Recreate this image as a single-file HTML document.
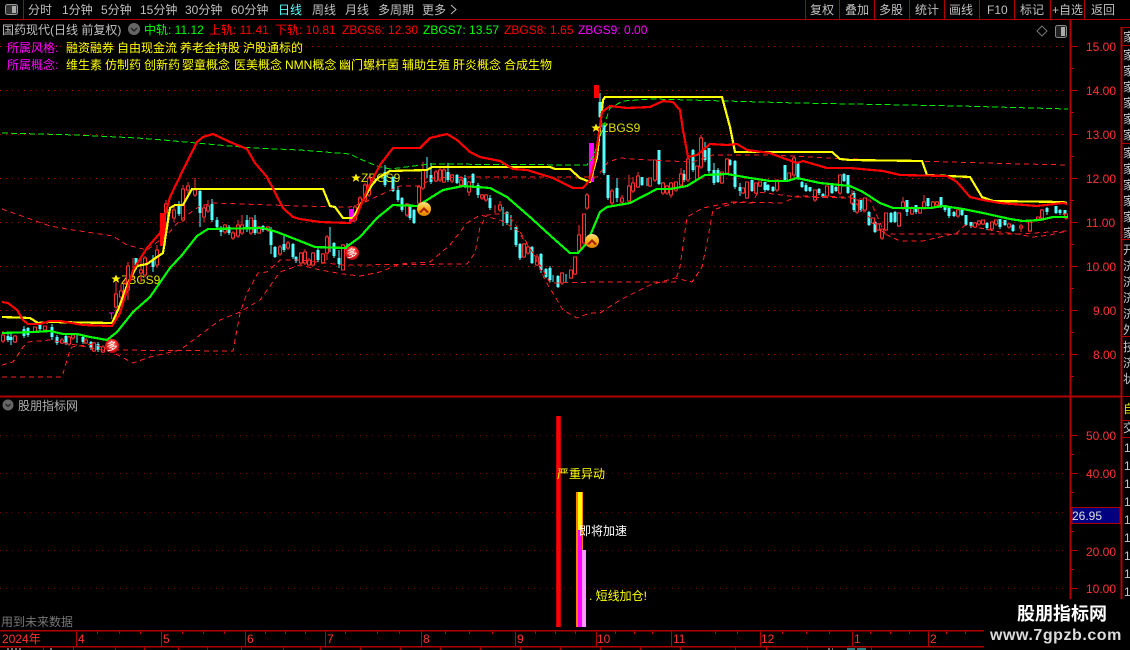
<!DOCTYPE html>
<html lang="zh">
<head>
<meta charset="utf-8">
<title>股朋指标网</title>
<style>
html,body{margin:0;padding:0;background:#000;width:1130px;height:650px;overflow:hidden}
svg{display:block;position:absolute;left:0;top:0}
text{font-family:"Liberation Sans","WenQuanYi Zen Hei","Noto Sans CJK SC",sans-serif;font-size:12px}
.g{fill:#c0c0c0}
.r{fill:#ff3232}
.y{fill:#ffff00}
.m{fill:#ff00ff}
.l{fill:#00ff00}
</style>
</head>
<body>
<svg width="1130" height="650" viewBox="0 0 1130 650" xmlns="http://www.w3.org/2000/svg">
<rect width="1130" height="650" fill="#000"/>

<!-- grid -->
<g stroke="#b00000" stroke-width="1" stroke-dasharray="1 5" shape-rendering="crispEdges">
<path d="M0 46.500H1068M0 90.500H1068M0 134.500H1068M0 178.500H1068M0 222.500H1068M0 266.500H1068M0 310.500H1068M0 354.500H1068"/>
<path stroke="#800000" d="M0 435.500H1068M0 473.500H1068M0 512.500H1068M0 550.500H1068M0 588.500H1068"/>
</g>

<!-- frame lines -->
<g stroke="#b00000" fill="none" shape-rendering="crispEdges">
<path d="M0 19.500H1130" />
<path d="M23.500 0V19M805.500 0V19M839.500 0V19M874.500 0V19M909.500 0V19M944.500 0V19M979.500 0V19M1014.500 0V19M1050.500 0V19M1084.500 0V19"/>
<path stroke-width="2" d="M1070.500 20V599M1121.500 27V599"/>
<path stroke-width="2" d="M0 396.500H1122"/>
<path d="M1122 27.500H1130M1122 45.500H1130M1122 143.500H1130M1122 239.500H1130M1122 336.500H1130M1122 396.500H1130M1122 420.500H1130M1122 437.500H1130"/>
<path d="M1071 46.500H1078M1071 90.500H1078M1071 134.500H1078M1071 178.500H1078M1071 222.500H1078M1071 266.500H1078M1071 310.500H1078M1071 354.500H1078"/>
<path d="M1071 68.500H1074M1071 112.500H1074M1071 156.500H1074M1071 200.500H1074M1071 244.500H1074M1071 288.500H1074M1071 332.500H1074M1071 376.500H1074"/>
<path d="M1071 435.500H1078M1071 473.500H1078M1071 550.500H1078M1071 588.500H1078M1071 454.500H1074M1071 492.500H1074M1071 531.500H1074M1071 569.500H1074"/>
<path stroke-width="1.500" d="M0 630.500H984M0 646.500H984"/>
<path d="M76.500 630V646M161.500 630V646M245.500 630V646M325.500 630V646M421.500 630V646M515.500 630V646M596.500 630V646M671.500 630V646M760.500 630V646M852.500 630V646M928.500 630V646"/>
<path d="M97.500 630V634M119.500 630V634M140.500 630V634M182.500 630V634M203.500 630V634M224.500 630V634M265.500 630V634M285.500 630V634M305.500 630V634M345.500 630V634M377.500 630V634M399.500 630V634M445.500 630V634M469.500 630V634M492.500 630V634M535.500 630V634M555.500 630V634M575.500 630V634M615.500 630V634M634.500 630V634M652.500 630V634M715.500 630V634M737.500 630V634M782.500 630V634M806.500 630V634M829.500 630V634M870.500 630V634M890.500 630V634M909.500 630V634M946.500 630V634M965.500 630V634"/>
<path d="M43.500 646V650M73.500 646V650M115.500 646V650M144.500 646V650M178.500 646V650M207.500 646V650M241.500 646V650M283.500 646V650M320.500 646V650M360.500 646V650M400.500 646V650M440.500 646V650M480.500 646V650M520.500 646V650M560.500 646V650M600.500 646V650M640.500 646V650M680.500 646V650M735.500 646V650M766.500 646V650M807.500 646V650M871.500 646V650"/>
</g>
<!-- clipped tick-row glyph tops below the date axis -->
<path d="M7 649h15M50 649h4M828 649h5" stroke="#ddd" stroke-width="1" shape-rendering="crispEdges" stroke-dasharray="2 2"/>
<path d="M847 649h8M857 649h9" stroke="#55ffff" stroke-width="1" shape-rendering="crispEdges"/>

<!-- signal labels (under candles and lines) -->
<text x="121" y="284" fill="#e0e000">ZBGS9</text>
<text x="361" y="182" fill="#e0e000">ZBGS9</text>
<text x="601" y="132" fill="#e0e000">ZBGS9</text>

<!-- cyan candles -->
<path stroke="#55ffff" stroke-width="1" fill="none" shape-rendering="crispEdges" d="M8 332V342M11 333V345M24 326V338M28 327V337M40 322V331M52 324V340M57 335V345M66 334V345M77 334V343M83 335V344M91 341V350M98 342V352M136 258V270M153 255V272M179 201V216M200 190V227M212 199V222M217 217V228M221 226V236M229 225V235M247 215V232M255 215V235M263 225V232M271 227V254M275 246V258M284 236V252M293 243V259M296 256V263M318 248V262M330 227V252M334 242V258M339 250V268M347 243V255M385 165V187M393 176V192M398 186V202M402 197V212M410 204V220M414 209V224M427 157V178M431 163V184M448 163V182M457 174V184M465 175V188M473 173V187M478 183V198M490 195V210M503 207V226M507 211V225M511 215V230M516 227V247M520 243V260M532 246V264M541 253V273M546 268V278M550 266V282M553 275V282M558 275V288M566 274V282M600 93V118M604 125V175M608 175V200M617 178V202M642 177V186M647 178V186M659 150V185M684 170V182M693 149V172M705 142V162M709 148V173M714 163V185M718 168V183M730 159V166M735 160V189M740 183V196M752 180V192M765 182V192M768 184V191M773 186V192M785 165V182M798 162V180M802 181V188M806 183V192M810 187V192M819 188V195M823 193V198M832 183V194M836 186V192M844 173V182M848 175V194M854 191V212M861 200V212M869 211V226M875 221V233M891 212V223M895 211V223M907 200V216M916 205V214M928 198V208M941 197V208M945 205V212M949 208V218M954 211V217M962 208V216M966 215V226M971 222V228M987 222V230M1000 219V229M1005 220V226M1013 224V232M1047 207V215M1056 206V214M1060 209V215M1065 210V216"/>
<path stroke="#55ffff" stroke-width="3" fill="none" shape-rendering="crispEdges" d="M8 336V340M11 337V340M24 329V336M28 328V335M40 325V329M52 327V337M57 337V343M66 336V343M83 337V342M91 342V348M98 344V350M136 258V266M153 260V267M179 205V214M200 191V213M212 204V220M217 220V227M221 228V232M229 227V233M247 220V228M255 220V233M263 226V230M271 230V245M275 247V257M284 244V250M293 244V257M296 257V261M318 250V260M334 243V256M339 258V264M347 248V252M385 172V185M393 177V191M398 190V200M402 198V210M410 205V218M414 210V223M431 175V182M448 172V180M457 175V183M465 178V185M473 174V183M478 185V195M490 198V208M507 212V223M516 227V245M520 244V258M532 247V263M541 254V270M546 269V277M550 268V280M558 276V287M600 102V117M604 125V173M608 175V198M617 188V198M642 177V185M659 150V184M684 174V180M693 150V170M705 150V160M709 148V171M714 170V183M718 170V182M730 160V165M735 161V187M740 187V191M752 180V191M765 182V190M768 185V190M773 187V191M785 165V180M798 162V178M802 182V187M806 185V191M810 187V191M819 189V193M823 194V197M832 183V193M836 187V191M844 174V181M848 175V193M854 193V210M861 200V210M869 212V225M875 222V232M891 213V222M895 212V222M907 200V212M916 205V212M928 198V206M941 197V207M945 205V210M949 208V216M954 212V216M962 208V215M966 215V225M971 222V226M987 223V228M1000 219V227M1005 220V225M1013 225V231M1047 208V212M1056 206V213M1060 210V213M1065 210V215"/>

<!-- red candles -->
<path stroke="#ff3232" stroke-width="1" fill="none" shape-rendering="crispEdges" d="M3 331V343M15 335V343M35 327V333M45 326V332M62 338V344M69 336V346M73 334V340M86 338V344M94 342V352M103 345V353M116 282V315M121 284V300M125 280V296M128 262V300M133 258V280M141 258V282M145 256V277M157 245V268M166 200V235M174 205V222M183 185V222M188 182V195M195 178V197M204 205V222M208 200V213M225 224V234M233 231V240M238 220V238M242 215V235M251 218V235M259 226V234M268 226V232M280 245V256M288 241V250M301 252V265M305 249V265M309 258V266M313 252V266M323 253V264M327 235V260M343 244V270M355 205V222M360 196V208M365 183V202M369 176V197M407 203V217M419 185V205M423 162V190M436 170V182M440 168V182M444 168V183M452 174V183M461 176V187M469 181V196M482 194V200M486 194V202M495 205V213M500 201V212M524 243V258M528 246V255M537 254V266M562 272V285M571 270V279M575 257V275M579 225V253M584 214V245M587 193V210M612 189V205M622 195V205M629 175V203M633 177V193M638 172V188M650 178V187M655 160V182M663 182V195M667 185V195M671 182V198M676 182V192M681 168V186M688 158V182M697 166V180M701 135V169M722 172V184M727 158V175M743 188V194M747 182V199M756 183V194M760 182V187M777 180V192M789 173V181M794 156V178M815 190V202M827 186V198M840 175V195M852 190V205M857 200V214M865 198V212M873 218V224M878 223V231M882 229V240M886 213V231M899 213V227M903 197V210M912 206V215M920 208V214M924 195V210M933 201V209M937 201V208M958 209V218M975 222V228M979 220V226M983 220V225M992 221V230M996 220V226M1009 223V229M1021 224V232M1030 221V232M1038 217V220M1042 209V220M1066 213V220"/>
<path stroke="#ff3232" stroke-width="1" fill="#000" shape-rendering="crispEdges" d="M1.500 335h3v6h-3zM13.500 336h3v6h-3zM33.500 327h3v5h-3zM43.500 326h3v4h-3zM60.500 340h3v3h-3zM67.500 337h3v7h-3zM71.500 335h3v3h-3zM84.500 340h3v3h-3zM92.500 343h3v8h-3zM101.500 347h3v5h-3zM114.500 294h3v13h-3zM119.500 291h3v6h-3zM123.500 284h3v9h-3zM126.500 266h3v24h-3zM139.500 270h3v3h-3zM143.500 258h3v17h-3zM155.500 250h3v15h-3zM164.500 204h3v19h-3zM172.500 210h3v8h-3zM181.500 189h3v31h-3zM186.500 186h3v4h-3zM193.500 190h3v5h-3zM202.500 208h3v9h-3zM206.500 206h3v5h-3zM223.500 225h3v7h-3zM231.500 233h3v5h-3zM236.500 225h3v11h-3zM240.500 225h3v8h-3zM249.500 218h3v15h-3zM257.500 227h3v6h-3zM266.500 227h3v3h-3zM278.500 247h3v7h-3zM286.500 243h3v5h-3zM299.500 253h3v10h-3zM303.500 252h3v11h-3zM307.500 260h3v5h-3zM311.500 253h3v12h-3zM321.500 254h3v9h-3zM325.500 237h3v16h-3zM341.500 245h3v25h-3zM353.500 207h3v13h-3zM358.500 198h3v7h-3zM363.500 185h3v15h-3zM367.500 178h3v17h-3zM405.500 204h3v11h-3zM417.500 187h3v16h-3zM421.500 170h3v18h-3zM434.500 172h3v9h-3zM438.500 170h3v10h-3zM442.500 170h3v12h-3zM450.500 175h3v6h-3zM459.500 180h3v5h-3zM467.500 182h3v10h-3zM480.500 195h3v3h-3zM484.500 195h3v5h-3zM498.500 205h3v5h-3zM522.500 244h3v13h-3zM526.500 247h3v6h-3zM535.500 257h3v8h-3zM560.500 273h3v10h-3zM569.500 270h3v8h-3zM573.500 257h3v17h-3zM577.500 235h3v16h-3zM582.500 214h3v29h-3zM585.500 195h3v13h-3zM610.500 191h3v12h-3zM620.500 198h3v4h-3zM627.500 186h3v15h-3zM631.500 183h3v8h-3zM636.500 176h3v11h-3zM648.500 178h3v8h-3zM653.500 160h3v20h-3zM661.500 183h3v10h-3zM665.500 186h3v7h-3zM669.500 183h3v12h-3zM674.500 182h3v8h-3zM679.500 174h3v11h-3zM686.500 159h3v21h-3zM695.500 166h3v13h-3zM699.500 138h3v29h-3zM720.500 172h3v11h-3zM725.500 159h3v14h-3zM741.500 188h3v5h-3zM745.500 182h3v16h-3zM754.500 183h3v10h-3zM758.500 182h3v4h-3zM775.500 180h3v10h-3zM787.500 173h3v7h-3zM792.500 158h3v17h-3zM813.500 190h3v10h-3zM825.500 186h3v10h-3zM838.500 175h3v18h-3zM850.500 195h3v8h-3zM855.500 200h3v12h-3zM863.500 198h3v12h-3zM871.500 218h3v5h-3zM876.500 224h3v6h-3zM880.500 229h3v9h-3zM884.500 213h3v17h-3zM897.500 213h3v13h-3zM901.500 202h3v6h-3zM910.500 208h3v6h-3zM918.500 208h3v5h-3zM922.500 202h3v6h-3zM931.500 202h3v6h-3zM935.500 202h3v3h-3zM956.500 210h3v6h-3zM973.500 223h3v4h-3zM977.500 221h3v3h-3zM981.500 220h3v4h-3zM990.500 222h3v7h-3zM994.500 220h3v4h-3zM1007.500 224h3v3h-3zM1019.500 226h3v2h-3zM1028.500 222h3v9h-3zM1036.500 217h3v2h-3zM1040.500 210h3v8h-3zM1064.500 214h3v4h-3z"/>

<!-- solid bars -->
<g shape-rendering="crispEdges">
<rect x="160" y="213" width="6" height="33" fill="#ff0000"/>
<rect x="349" y="209" width="5" height="13" fill="#ff00ff"/>
<rect x="589" y="143" width="5" height="39" fill="#ff00ff"/>
<rect x="594" y="85" width="5" height="13" fill="#ff0000"/>
<path d="M109 313h5M111.500 313v6" stroke="#ff00ff" fill="none"/>
</g>

<!-- dashed bands -->
<g fill="none" stroke="#ff2020" stroke-width="1" stroke-dasharray="5 4" shape-rendering="crispEdges">
<polyline points="2,209 33,220 50,226 73,230 113,236 127,245 147,250 160,240 167,235 180,220 200,206 213,203 300,206 350,207 363,203 380,195 400,186 420,186 433,178 473,177 577,177 597,177 608,162 620,158 647,160 693,162 713,155 770,155 850,159 983,163 1067,165"/>
<polyline points="2,377 62,377 70,350 72,347 93,344 110,350 233,351 240,313 247,293 258,273 267,272 280,260 300,260 317,262 343,265 467,264 475,253 480,227 487,215 507,213 517,227 527,243 543,270 550,283 600,282 675,282 680,267 687,217 703,208 733,202 752,203 758,192 797,197 850,198 870,200 885,234 963,234 1017,234 1067,231"/>
<polyline points="2,365 13,362 23,347 28,342 50,340 112,352 133,363 150,357 167,353 180,350 200,335 220,320 240,312 260,300 280,272 300,265 320,270 343,274 360,276 380,272 400,264 430,262 450,245 467,223 480,215 500,220 517,230 533,253 545,280 563,310 577,318 590,313 600,313 620,300 650,285 675,278 692,282 702,267 707,243 713,210 737,202 783,203 797,196 850,197 885,234 900,241 923,241 957,233 965,225 1000,232 1017,234 1033,237 1050,235 1067,231"/>
</g>
<g fill="none" stroke="#00ee00" stroke-width="1" stroke-dasharray="6 3" shape-rendering="crispEdges">
<polyline points="2,133 77,135 137,138 163,140 207,144 253,148 300,150 350,154 360,159 377,166 390,169 430,164 587,165 593,157 610,108 623,101 653,99 797,103 850,104 960,106 1068,109"/>
</g>

<!-- main lines -->
<g fill="none" stroke-linejoin="round" stroke-width="2.200" shape-rendering="crispEdges">
<polyline stroke="#00ff00" points="2,333 33,332 50,331 63,334 77,334 90,337 107,340 117,332 133,312 150,297 170,268 182,255 197,236 208,229 263,228 277,232 300,241 315,247 345,248 360,237 377,218 393,205 417,206 427,200 443,190 463,186 490,188 507,197 530,217 553,238 570,253 578,253 587,243 600,212 607,207 630,203 657,189 670,189 687,186 705,175 727,174 750,178 770,181 787,181 797,178 820,183 850,186 863,192 880,203 893,208 930,208 943,206 963,209 983,213 1010,219 1023,221 1040,220 1053,217 1068,217"/>
<polyline stroke="#ffff00" points="2,317 30,318 38,323 50,322 112,323 118,310 128,283 137,266 147,264 157,257 163,253 170,208 175,205 183,205 192,189 323,189 330,206 335,207 343,218 353,218 363,200 372,185 378,178 390,171 427,170 432,167 550,167 555,169 570,169 580,178 590,182 597,157 603,100 605,97 722,97 730,127 735,152 832,152 840,159 850,160 922,161 927,175 970,177 982,197 993,201 1063,202 1067,203"/>
<polyline stroke="#ff0000" points="2,302 8,303 17,310 23,320 28,324 40,324 50,321 60,321 83,325 112,326 120,313 133,270 147,248 160,233 170,197 183,170 197,142 203,137 213,134 230,142 247,149 255,163 267,177 283,208 293,217 300,219 320,222 350,223 357,215 367,190 380,165 393,148 420,148 430,138 447,134 457,140 470,152 480,157 500,161 513,169 527,170 553,178 573,188 583,188 590,180 595,160 602,112 610,106 627,108 650,107 663,101 673,102 680,110 683,130 688,157 697,155 710,144 727,145 737,144 747,150 770,153 783,158 797,163 803,161 827,168 850,168 883,171 900,175 947,176 957,182 970,197 983,200 1000,203 1037,206 1063,203 1067,204"/>
</g>

<!-- markers -->
<defs>
<radialGradient id="rd" cx="50%" cy="40%" r="60%"><stop offset="0" stop-color="#ff9a8a"/><stop offset=".6" stop-color="#f02020"/><stop offset="1" stop-color="#b00000"/></radialGradient>
<linearGradient id="gd" x1="0" y1="0" x2="0" y2="1"><stop offset="0" stop-color="#ffe28a"/><stop offset=".6" stop-color="#ffa500"/><stop offset="1" stop-color="#d88000"/></linearGradient>
</defs>
<circle cx="112" cy="346" r="7" fill="url(#rd)"/>
<text x="112" y="350" text-anchor="middle" style="font-size:11px" fill="#fff">多</text>
<circle cx="352" cy="253" r="7" fill="url(#rd)"/>
<text x="352" y="257" text-anchor="middle" style="font-size:11px" fill="#fff">多</text>
<circle cx="424" cy="209" r="7" fill="url(#gd)"/>
<path d="M419 212l5-5 5 5-2 1-3-3-3 3z" fill="#a82000"/>
<circle cx="592" cy="241" r="7" fill="url(#gd)"/>
<path d="M587 244l5-5 5 5-2 1-3-3-3 3z" fill="#a82000"/>

<!-- stars -->
<path d="M116 274.500l1.400 3h3.300l-2.600 2.100 1 3.300-3.100-2-3.100 2 1-3.300-2.600-2.100h3.300z" fill="#ffee00"/>
<path d="M356 173.500l1.400 3h3.300l-2.600 2.100 1 3.300-3.100-2-3.100 2 1-3.300-2.600-2.100h3.300z" fill="#ffee00"/>
<path d="M596 123.500l1.400 3h3.300l-2.600 2.100 1 3.300-3.100-2-3.100 2 1-3.300-2.600-2.100h3.300z" fill="#ffee00"/>

<!-- nav -->
<rect x="0" y="0" width="23" height="19" fill="#000"/>
<rect x="5.500" y="4.500" width="12" height="10" rx="2" fill="#333" stroke="#999"/>
<rect x="12" y="6" width="4" height="7" fill="#aaa"/>
<g class="g">
<text class="g" x="28" y="14">分时</text>
<text class="g" x="62" y="14">1分钟</text>
<text class="g" x="101" y="14">5分钟</text>
<text class="g" x="140" y="14">15分钟</text>
<text class="g" x="185" y="14">30分钟</text>
<text class="g" x="231" y="14">60分钟</text>
<text x="278" y="14" fill="#55ffff">日线</text>
<text class="g" x="312" y="14">周线</text>
<text class="g" x="345" y="14">月线</text>
<text class="g" x="378" y="14">多周期</text>
<text class="g" x="422" y="14">更多</text>
<path d="M451 5l5 4.500-5 4.500" fill="none" stroke="#c0c0c0"/>
<text class="g" x="810" y="14">复权</text>
<text class="g" x="845" y="14">叠加</text>
<text class="g" x="879" y="14">多股</text>
<text class="g" x="915" y="14">统计</text>
<text class="g" x="949" y="14">画线</text>
<text class="g" x="987" y="14">F10</text>
<text class="g" x="1020" y="14">标记</text>
<text class="g" x="1052" y="14">+自选</text>
<text class="g" x="1091" y="14">返回</text>
</g>

<!-- header -->
<text class="g" x="2" y="34">国药现代(日线 前复权)</text>
<circle cx="134" cy="29" r="6" fill="#666"/>
<path d="M131 28l3 3 3-3" fill="none" stroke="#222" stroke-width="1.500"/>
<text class="l" x="144" y="34">中轨: 11.12</text>
<text class="r" x="209" y="34" style="fill:#ff0000">上轨: 11.41</text>
<text class="r" x="275" y="34" style="fill:#ff0000">下轨: 10.81</text>
<text x="342" y="34" fill="#ff0000">ZBGS6: 12.30</text>
<text class="l" x="423" y="34">ZBGS7: 13.57</text>
<text x="504" y="34" fill="#ff0000">ZBGS8: 1.65</text>
<text class="m" x="578" y="34">ZBGS9: 0.00</text>
<path d="M1042 26l5 5-5 5-5-5z" fill="none" stroke="#777"/>
<rect x="1055.500" y="25.500" width="11" height="12" rx="2" fill="#222" stroke="#888"/>
<rect x="1061" y="27" width="4" height="9" fill="#aaa"/>

<text class="m" x="7" y="52">所属风格:</text>
<text class="y" x="66" y="52">融资融券</text>
<text class="y" x="117" y="52">自由现金流</text>
<text class="y" x="180" y="52">养老金持股</text>
<text class="y" x="243" y="52">沪股通标的</text>
<text class="m" x="7" y="69">所属概念:</text>
<text class="y" x="66" y="69">维生素</text>
<text class="y" x="105" y="69">仿制药</text>
<text class="y" x="144" y="69">创新药</text>
<text class="y" x="182" y="69">婴童概念</text>
<text class="y" x="234" y="69">医美概念</text>
<text class="y" x="285" y="69">NMN概念</text>
<text class="y" x="339" y="69">幽门螺杆菌</text>
<text class="y" x="402" y="69">辅助生殖</text>
<text class="y" x="453" y="69">肝炎概念</text>
<text class="y" x="504" y="69">合成生物</text>

<!-- price axis -->
<text class="r" x="1086" y="51">15.00</text>
<text class="r" x="1086" y="95">14.00</text>
<text class="r" x="1086" y="139">13.00</text>
<text class="r" x="1086" y="183">12.00</text>
<text class="r" x="1086" y="227">11.00</text>
<text class="r" x="1086" y="271">10.00</text>
<text class="r" x="1093" y="315">9.00</text>
<text class="r" x="1093" y="359">8.00</text>

<!-- sub header -->
<circle cx="8" cy="405" r="5.500" fill="#666"/>
<path d="M5.500 404l2.500 2.500 2.500-2.500" fill="none" stroke="#222" stroke-width="1.300"/>
<text class="g" x="18" y="410" style="fill:#b0b0b0">股朋指标网</text>

<!-- sub axis -->
<text class="r" x="1086" y="440">50.00</text>
<text class="r" x="1086" y="478">40.00</text>
<text class="r" x="1086" y="556">20.00</text>
<text class="r" x="1086" y="593">10.00</text>
<rect x="1072" y="507.500" width="48" height="16" fill="#000080" stroke="#b00000"/>
<text x="1072" y="520" fill="#e0e0e0">26.95</text>

<!-- sub bars -->
<g shape-rendering="crispEdges">
<rect x="556" y="416" width="5" height="211" fill="#c80000"/>
<rect x="557" y="416" width="3" height="211" fill="#ff0000"/>
<rect x="576" y="492" width="7" height="135" fill="#ff8000"/>
<rect x="578" y="492" width="4" height="38" fill="#ffff00"/>
<rect x="578" y="530" width="4" height="97" fill="#ff00ff"/>
<rect x="582" y="550" width="4" height="77" fill="#ff99ff"/>
</g>
<text class="y" x="557" y="478">严重异动</text>
<text x="579" y="535" fill="#fff">即将加速</text>
<text class="y" x="589" y="600">. 短线加仓!</text>
<text x="1" y="626" fill="#777">用到未来数据</text>

<!-- dates -->
<text class="r" x="2" y="643">2024年</text>
<text class="r" x="78" y="643">4</text>
<text class="r" x="163" y="643">5</text>
<text class="r" x="247" y="643">6</text>
<text class="r" x="327" y="643">7</text>
<text class="r" x="423" y="643">8</text>
<text class="r" x="517" y="643">9</text>
<text class="r" x="597" y="643">10</text>
<text class="r" x="673" y="643">11</text>
<text class="r" x="761" y="643">12</text>
<text class="r" x="854" y="643">1</text>
<text class="r" x="930" y="643">2</text>

<!-- right side column (clipped) -->
<g fill="#c8c8c8">
<text x="1123" y="41">家</text>
<text x="1123" y="59">家</text><text x="1123" y="75">家</text><text x="1123" y="91">家</text><text x="1123" y="107">家</text><text x="1123" y="123">家</text><text x="1123" y="139">家</text>
<text x="1123" y="157">家</text><text x="1123" y="173">家</text><text x="1123" y="189">家</text><text x="1123" y="205">家</text><text x="1123" y="221">家</text><text x="1123" y="237">家</text>
<text x="1123" y="254">开</text><text x="1123" y="270">济</text><text x="1123" y="286">济</text><text x="1123" y="302">济</text><text x="1123" y="318">济</text><text x="1123" y="334">外</text>
<text x="1123" y="351">技</text><text x="1123" y="367">济</text><text x="1123" y="383">状</text>
<text x="1123" y="432">交</text>
<text x="1124" y="452">1</text><text x="1124" y="470">1</text><text x="1124" y="488">1</text><text x="1124" y="506">1</text><text x="1124" y="524">1</text><text x="1124" y="542">1</text><text x="1124" y="560">1</text><text x="1124" y="578">1</text><text x="1124" y="596">1</text>
</g>
<text x="1123" y="413" fill="#e0e000">自</text>

<!-- watermark -->
<rect x="984" y="600" width="146" height="50" fill="#000"/>
<text x="1017" y="620" fill="#fff" style="font-size:18px;font-weight:bold">股朋指标网</text>
<text x="990" y="640" fill="#dcdcdc" style="font-size:16px;letter-spacing:.55px;font-weight:bold">www.7gpzb.com</text>
</svg>
</body>
</html>
